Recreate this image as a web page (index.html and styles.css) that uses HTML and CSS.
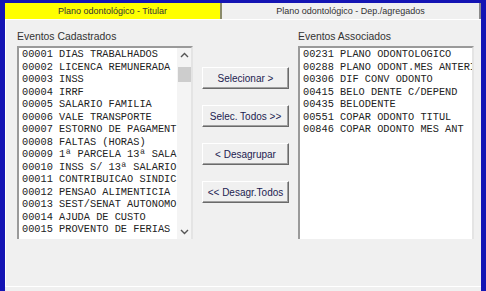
FILE: index.html
```html
<!doctype html>
<html lang="pt-BR">
<head>
    <meta charset="UTF-8" />
    <title>Plano odontológico</title>
    <link rel="stylesheet" href="styles.css">
</head>
<body>
    <div class="window">
        <div class="tabs">
            <div class="tab active">Plano odontológico - Titular</div>
            <div class="tab">Plano odontológico - Dep./agregados</div>
        </div>

        <div class="panel">
            <div class="group">
                <div class="label">Eventos Cadastrados</div>
                <div class="listbox">
                    <div class="items">
                        <div>00001 DIAS TRABALHADOS</div>
                        <div>00002 LICENCA REMUNERADA</div>
                        <div>00003 INSS</div>
                        <div>00004 IRRF</div>
                        <div>00005 SALARIO FAMILIA</div>
                        <div>00006 VALE TRANSPORTE</div>
                        <div>00007 ESTORNO DE PAGAMENT</div>
                        <div>00008 FALTAS (HORAS)</div>
                        <div>00009 1ª PARCELA 13ª SALA</div>
                        <div>00010 INSS S/ 13ª SALARIO</div>
                        <div>00011 CONTRIBUICAO SINDIC</div>
                        <div>00012 PENSAO ALIMENTICIA</div>
                        <div>00013 SEST/SENAT AUTONOMO</div>
                        <div>00014 AJUDA DE CUSTO</div>
                        <div>00015 PROVENTO DE FERIAS</div>
                    </div>
                    <div class="scrollbar">
                        <svg class="arrow" width="9" height="6" viewBox="0 0 9 6"><path d="M1 5 L4.5 1.5 L8 5" fill="none" stroke="#555" stroke-width="1.4"/></svg>
                        <div class="thumb"></div>
                        <div class="track"></div>
                        <svg class="arrow" width="9" height="6" viewBox="0 0 9 6"><path d="M1 1 L4.5 4.5 L8 1" fill="none" stroke="#555" stroke-width="1.4"/></svg>
                    </div>
                </div>
            </div>

            <div class="actions">
                <button class="btn">Selecionar &gt;</button>
                <button class="btn">Selec. Todos &gt;&gt;</button>
                <button class="btn">&lt; Desagrupar</button>
                <button class="btn">&lt;&lt; Desagr.Todos</button>
            </div>

            <div class="group">
                <div class="label">Eventos Associados</div>
                <div class="listbox">
                    <div class="items">
                        <div>00231 PLANO ODONTOLOGICO</div>
                        <div>00288 PLANO ODONT.MES ANTERI</div>
                        <div>00306 DIF CONV ODONTO</div>
                        <div>00415 BELO DENTE C/DEPEND</div>
                        <div>00435 BELODENTE</div>
                        <div>00551 COPAR ODONTO TITUL</div>
                        <div>00846 COPAR ODONTO MES ANT</div>
                    </div>
                </div>
            </div>
        </div>
    </div>
</body>
</html>
```

FILE: styles.css
```css
body {
    margin: 0;
    background: #1414b4;
    font-family: "Liberation Sans", Arial, sans-serif;
    font-size: 11px;
    color: #222;
}
.window {
    margin: 3px 5px 0 5px;
    height: 288px;
    background: #f0f0f0;
    display: flex;
    flex-direction: column;
}
.tabs {
    display: flex;
    height: 16px;
    border-bottom: 1px solid #ffffff;
}
.tab {
    flex: 1;
    text-align: center;
    font-size: 9px;
    line-height: 16px;
    color: #333;
    border-right: 2px solid #8a8a8a;
}
.tab.active {
    flex: 0 0 215px;
    background: #ffff00;
    border-right: 2px solid #8a8a6a;
}
.panel {
    flex: 1;
    display: flex;
    gap: 9px;
    padding: 10px 0 0 11px;
    border-bottom: 1px solid #ffffff;
    margin-bottom: 4px;
    border-left: 1px solid #ffffff;
}
.group {
    width: 176px;
}
.label {
    font-size: 10.4px;
    line-height: 14px;
    margin-bottom: 2px;
    color: #333;
}
.listbox {
    display: flex;
    height: 191px;
    background: #ffffff;
    border-top: 2px solid #9a9a9a;
    border-left: 2px solid #9a9a9a;
    border-right: 2px solid #e4e4e4;
    overflow: hidden;
}
.items {
    flex: 1;
    padding: 0 0 0 3px;
    font-family: "Liberation Mono", "Courier New", monospace;
    font-size: 10.3px;
    line-height: 12.5px;
    color: #222;
    white-space: nowrap;
    overflow: hidden;
}
.scrollbar {
    width: 14px;
    background: #f4f4f4;
    display: flex;
    flex-direction: column;
    align-items: center;
    padding: 4px 0 4px;
}
.thumb {
    width: 13px;
    height: 15px;
    margin-top: 9px;
    background: #cdcdcd;
}
.track {
    flex: 1;
}
.actions {
    width: 87px;
    display: flex;
    flex-direction: column;
    gap: 16px;
    padding-top: 37px;
}
.btn {
    height: 22px;
    padding: 0;
    font-family: "Liberation Sans", Arial, sans-serif;
    font-size: 10px;
    color: #1c1c50;
    background: #f0f0f0;
    border: 1px solid;
    border-color: #ffffff #6a6a6a #6a6a6a #ffffff;
    box-shadow: inset -1px -1px 0 #a0a0a0;
}
```
